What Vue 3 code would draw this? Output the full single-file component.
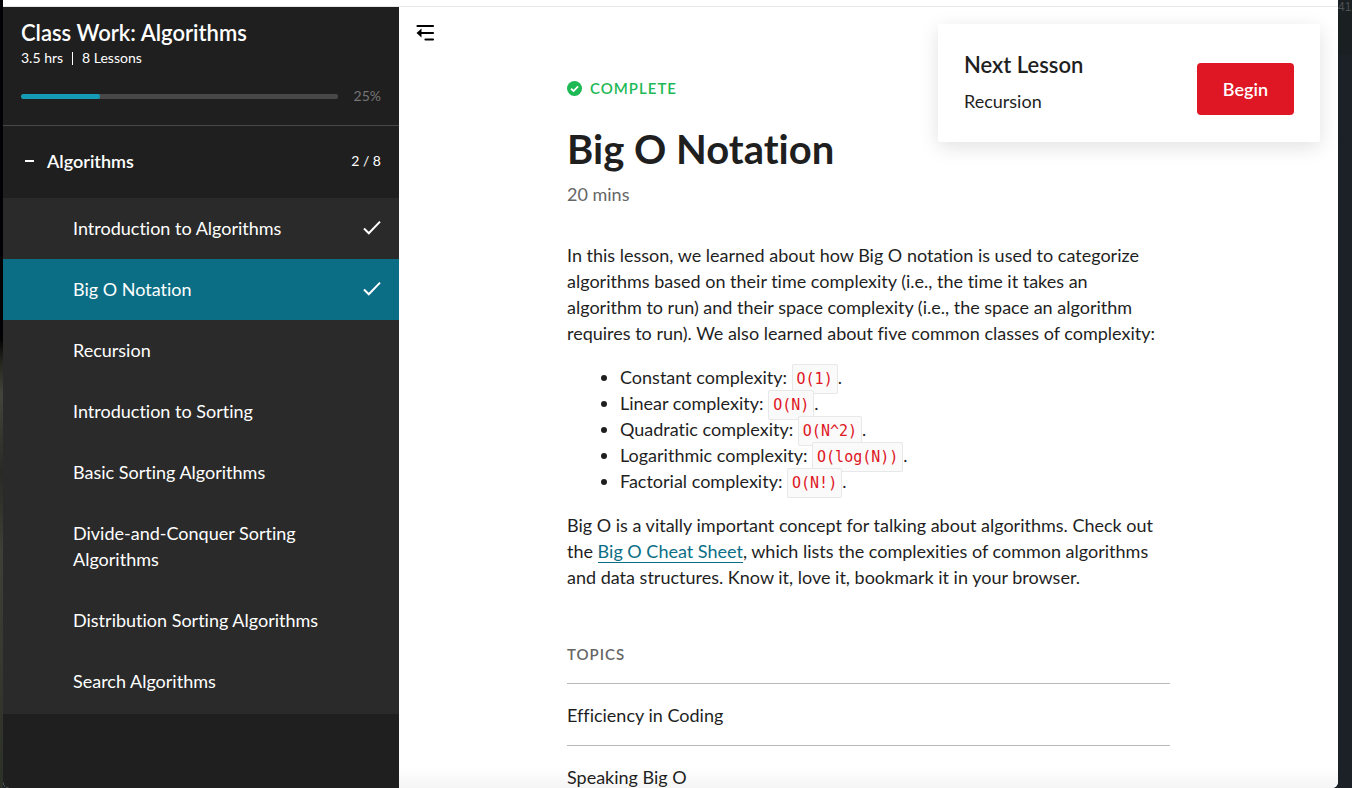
<script setup>
import { ref } from 'vue'

const open = ref(true)
const active = ref(1)
const progress = 25

const lessons = [
  { title: 'Introduction to Algorithms', done: true },
  { title: 'Big O Notation', done: true },
  { title: 'Recursion', done: false },
  { title: 'Introduction to Sorting', done: false },
  { title: 'Basic Sorting Algorithms', done: false },
  { title: 'Divide-and-Conquer Sorting Algorithms', done: false },
  { title: 'Distribution Sorting Algorithms', done: false },
  { title: 'Search Algorithms', done: false },
]

const classes = [
  { name: 'Constant', code: 'O(1)' },
  { name: 'Linear', code: 'O(N)' },
  { name: 'Quadratic', code: 'O(N^2)' },
  { name: 'Logarithmic', code: 'O(log(N))' },
  { name: 'Factorial', code: 'O(N!)' },
]

const topics = ['Efficiency in Coding', 'Speaking Big O']
</script>

<template>
  <div class="desktop">
    <div class="backdrop-left"></div>
    <div class="window">
      <div class="topbar"></div>
      <div class="body">
        <aside class="sidebar">
          <header class="course">
            <h2 class="course-title">Class Work: Algorithms</h2>
            <p class="course-meta"><span>3.5 hrs</span><span class="bar"></span><span>8 Lessons</span></p>
            <div class="progress-row">
              <progress class="progress" :value="progress" max="100" aria-label="Course progress"></progress>
              <span class="percent">{{ progress }}%</span>
            </div>
          </header>
          <button class="section" type="button" :aria-expanded="open" @click="open = !open">
            <span class="minus"></span>
            <span class="section-title">Algorithms</span>
            <span class="count">2 / 8</span>
          </button>
          <nav v-if="open" class="lessons" aria-label="Lessons">
            <a
              v-for="(lesson, i) in lessons"
              :key="lesson.title"
              href="#"
              class="lesson"
              :class="{ active: i === active }"
              @click.prevent="active = i"
            >
              <span class="lesson-title">{{ lesson.title }}</span>
              <svg v-if="lesson.done" class="check" viewBox="0 0 18 16" width="18" height="16" aria-hidden="true">
                <path d="M1 8.5 L5.8 13.3 L17 1.6" fill="none" stroke="#fff" stroke-width="2" />
              </svg>
            </a>
          </nav>
        </aside>

        <main class="main">
          <button class="collapse" type="button" aria-label="Collapse sidebar">
            <svg viewBox="0 0 18 18" width="18" height="18" aria-hidden="true">
              <path d="M0.5 2H16M4 9H16M8.5 15.5H16" fill="none" stroke="#000" stroke-width="2.2" stroke-linecap="round" />
              <path d="M-0.5 9L4.5 4.6V13.4Z" fill="#000" />
            </svg>
          </button>

          <section class="next">
            <div>
              <h3 class="next-title">Next Lesson</h3>
              <p class="next-name">Recursion</p>
            </div>
            <button class="begin" type="button">Begin</button>
          </section>

          <article class="article">
            <p class="status">
              <svg viewBox="0 0 16 16" width="15" height="15" aria-hidden="true">
                <circle cx="8" cy="8" r="8" fill="#1db954" />
                <path d="M4.3 8.2L7 10.7L11.8 5.7" fill="none" stroke="#fff" stroke-width="2" />
              </svg>
              <span>COMPLETE</span>
            </p>
            <h1 class="title">Big O Notation</h1>
            <p class="duration">20 mins</p>
            <p class="text">
              In this lesson, we learned about how Big O notation is used to categorize algorithms based on their time
              complexity (i.e., the time it takes an algorithm to run) and their space complexity (i.e., the space an
              algorithm requires to run). We also learned about five common classes of complexity:
            </p>
            <ul class="classes">
              <li v-for="c in classes" :key="c.name">{{ c.name }} complexity: <code>{{ c.code }}</code>.</li>
            </ul>
            <p class="text">
              Big O is a vitally important concept for talking about algorithms. Check out the
              <a class="link" href="#">Big O Cheat Sheet</a>, which lists the complexities of common algorithms and data
              structures. Know it, love it, bookmark it in your browser.
            </p>
            <h2 class="topics-title">TOPICS</h2>
            <ul class="topics">
              <li v-for="t in topics" :key="t">{{ t }}</li>
            </ul>
          </article>
        </main>
      </div>
    </div>
    <div class="backdrop-right">41</div>
  </div>
</template>

<style>
html,
body {
  margin: 0;
  background: #1c2027;
}
</style>

<style scoped>
.desktop {
  box-sizing: border-box;
  display: grid;
  grid-template-columns: 3px minmax(0, 1fr) 14px;
  height: 100vh;
  overflow: hidden;
  font-family: Lato, "Liberation Sans", sans-serif;
  font-size: 18px;
  line-height: 26px;
  font-variant-ligatures: none;
  color: #1f1f1f;
}
h1, h2, h3, p, ul {
  margin: 0;
  padding: 0;
  font-weight: 400;
}
button {
  font: inherit;
  border: 0;
  cursor: pointer;
}
.backdrop-left {
  background: linear-gradient(#020204 0 43%, #25261f 46%, #42443d 50%, #292a25 60%, #3d3f38 70%, #2d2f29);
}
.backdrop-right {
  background: linear-gradient(#1a1f22 0 55px, #1c2027 55px);
  color: #4b5055;
  font-family: "Liberation Sans", sans-serif;
  font-size: 12px;
  line-height: 14px;
}
.window {
  display: flex;
  flex-direction: column;
  min-height: 0;
  background: #fff;
  border-radius: 0 0 6px 6px;
  overflow: hidden;
}
.topbar {
  flex: none;
  height: 6px;
  border-bottom: 1px solid #e6e6e6;
}
.body {
  flex: 1;
  min-height: 0;
  display: grid;
  grid-template-columns: 396px minmax(0, 1fr);
}
.sidebar {
  box-sizing: border-box;
  min-height: 0;
  overflow: hidden;
  background: #1f1f1f;
  color: #fff;
}
.course {
  padding: 12px 18px 19px;
  border-bottom: 1px solid #484848;
}
.course-title {
  font-size: 22px;
  line-height: 28px;
  font-weight: 600;
}
.course-meta {
  display: flex;
  align-items: center;
  gap: 9px;
  font-size: 14px;
  line-height: 22px;
}
.bar {
  width: 1px;
  height: 13px;
  background: #fff;
}
.progress-row {
  display: flex;
  align-items: center;
  gap: 16px;
  margin-top: 17px;
  line-height: 20px;
}
.progress {
  appearance: none;
  flex: 1;
  min-width: 0;
  height: 5px;
  border: 0;
  border-radius: 2px;
  overflow: hidden;
  background: #484848;
}
.progress::-webkit-progress-bar {
  background: #484848;
}
.progress::-webkit-progress-value {
  background: #139cb3;
  border-radius: 2px;
}
.percent {
  font-size: 14px;
  color: #757575;
}
.section {
  display: flex;
  align-items: center;
  width: 100%;
  height: 72px;
  padding: 0 18px 2px 22px;
  background: none;
  color: #fff;
  text-align: left;
}
.minus {
  width: 9px;
  height: 2px;
  background: #fff;
}
.section-title {
  flex: 1;
  padding-left: 13px;
  font-weight: 600;
}
.count {
  font-size: 14px;
}
.lessons {
  padding-bottom: 2px;
  background: #2a2a2a;
}
.lesson {
  display: flex;
  align-items: center;
  justify-content: space-between;
  padding: 17px 18px 18px 70px;
  color: #fff;
  text-decoration: none;
}
.lesson.active {
  background: #0b6e85;
}
.lesson-title {
  max-width: 255px;
}
.check {
  flex: none;
}
.main {
  position: relative;
  min-width: 0;
  min-height: 0;
  overflow: hidden;
  background: linear-gradient(to top, #f5f5f5, #fff 20px);
}
.collapse {
  position: absolute;
  top: 17px;
  left: 18px;
  padding: 0;
  background: none;
  line-height: 0;
}
.collapse svg {
  overflow: visible;
}
.next {
  position: absolute;
  top: 17px;
  right: 18px;
  box-sizing: border-box;
  width: 382px;
  display: flex;
  align-items: flex-end;
  justify-content: space-between;
  padding: 23px 26px;
  background: #fff;
  border-radius: 2px;
  box-shadow: 0 5px 20px rgba(0, 0, 0, 0.12);
}
.next-title {
  font-size: 22px;
  line-height: 36px;
  font-weight: 600;
}
.next-name {
  line-height: 36px;
}
.begin {
  margin-bottom: 4px;
  padding: 13px 26px;
  border-radius: 4px;
  background: #df1624;
  color: #fff;
  font-weight: 600;
}
.article {
  max-width: 603px;
  margin: 0 auto;
  padding-top: 70px;
}
.status {
  display: flex;
  align-items: center;
  gap: 8px;
  font-size: 15px;
  line-height: 22px;
  font-weight: 600;
  letter-spacing: 1px;
  color: #1db954;
}
.title {
  margin-top: 23px;
  font-size: 40px;
  line-height: 54px;
  font-weight: 700;
}
.duration {
  margin-top: 5px;
  color: #666;
}
.text {
  max-width: 598px;
  margin-top: 35px;
}
.classes {
  margin-top: 18px;
  padding-left: 53px;
}
.classes + .text {
  margin-top: 18px;
}
code {
  padding: 5px 4px;
  border: 1px solid #e8e8e8;
  border-radius: 2px;
  background: #fafafa;
  color: #df1624;
  font-family: "DejaVu Sans Mono", monospace;
  font-size: 15px;
  line-height: 18px;
}
.link {
  color: #0b6e85;
  text-decoration: none;
  border-bottom: 1px solid #0b6e85;
}
.topics-title {
  margin-top: 51px;
  font-size: 15px;
  font-weight: 600;
  letter-spacing: 1px;
  color: #666;
}
.topics {
  margin-top: 16px;
  list-style: none;
}
.topics li {
  padding: 18px 0 17px;
  border-top: 1px solid #b8b8b8;
}
</style>
